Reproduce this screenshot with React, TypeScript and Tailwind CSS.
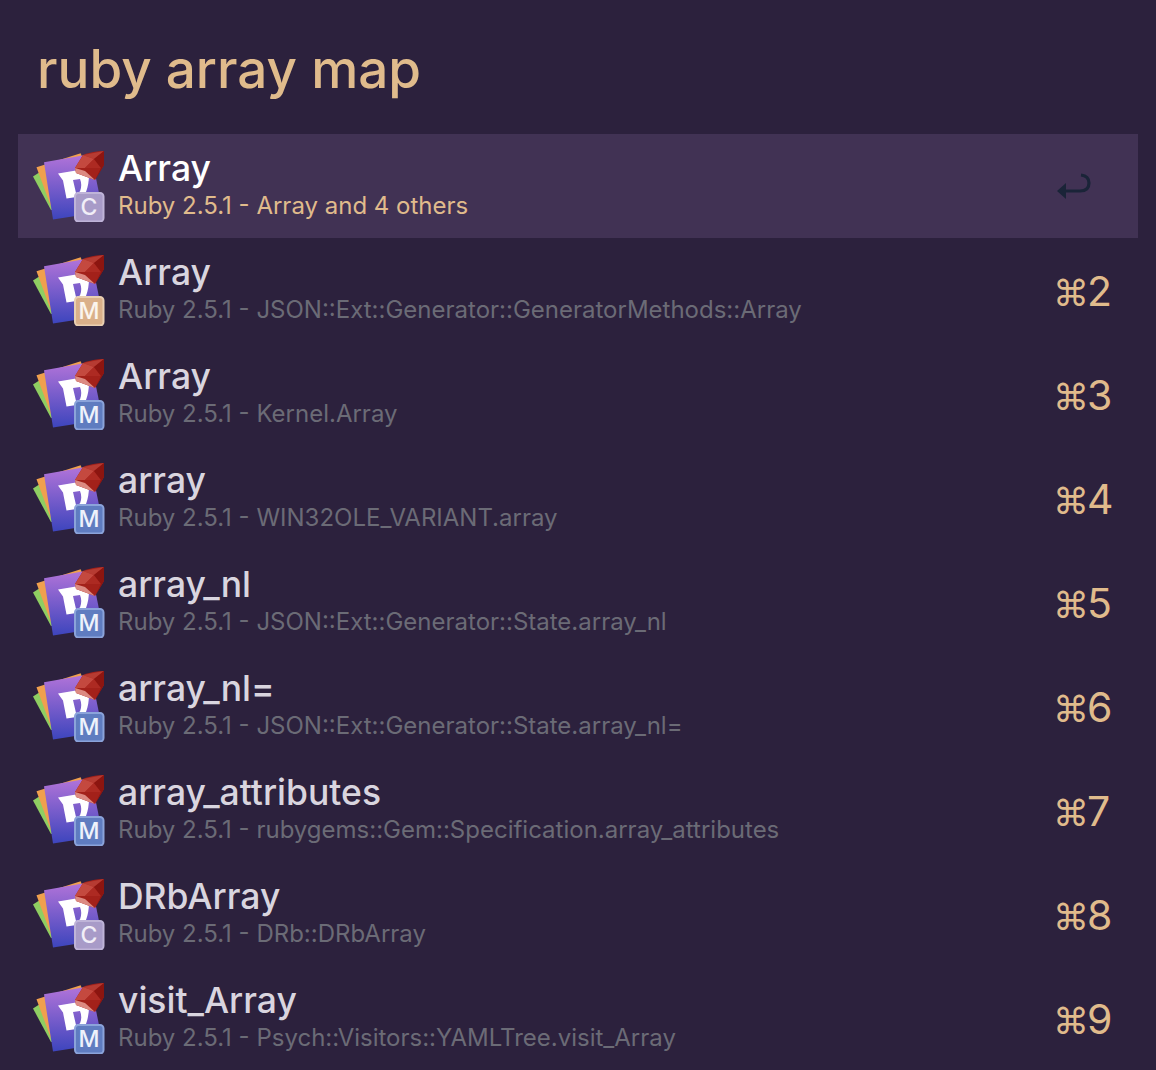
import React from "react";

const rows = [
  { t: "Array", s: "Ruby 2.5.1 - Array and 4 others", b: "C", k: "", sel: true },
  { t: "Array", s: "Ruby 2.5.1 - JSON::Ext::Generator::GeneratorMethods::Array", b: "MO", k: "2" },
  { t: "Array", s: "Ruby 2.5.1 - Kernel.Array", b: "M", k: "3" },
  { t: "array", s: "Ruby 2.5.1 - WIN32OLE_VARIANT.array", b: "M", k: "4" },
  { t: "array_nl", s: "Ruby 2.5.1 - JSON::Ext::Generator::State.array_nl", b: "M", k: "5" },
  { t: "array_nl=", s: "Ruby 2.5.1 - JSON::Ext::Generator::State.array_nl=", b: "M", k: "6" },
  { t: "array_attributes", s: "Ruby 2.5.1 - rubygems::Gem::Specification.array_attributes", b: "M", k: "7" },
  { t: "DRbArray", s: "Ruby 2.5.1 - DRb::DRbArray", b: "C", k: "8" },
  { t: "visit_Array", s: "Ruby 2.5.1 - Psych::Visitors::YAMLTree.visit_Array", b: "M", k: "9" },
];

function Icon({ b, id }: { b: string; id: number }) {
  const badge =
    b === "C"
      ? { fill: "#a89bc8", stroke: "#bfb4d8", ink: "#f1eef7" }
      : b === "MO"
      ? { fill: "#dab08a", stroke: "#e9cfb2", ink: "#fbf5ee" }
      : { fill: "#5f7cc0", stroke: "#8ba3da", ink: "#eef2fb" };
  return (
    <svg width="72" height="72" viewBox="0 0 72 72" className="shrink-0">
      <defs>
        <linearGradient id={`p${id}`} x1="0" y1="0" x2="0" y2="1">
          <stop offset="0" stopColor="#b374d9" />
          <stop offset="1" stopColor="#3d45bd" />
        </linearGradient>
      </defs>
      <path d="M0 26.5 L7 22 L20 60 L18 60 Z" fill="#8fce62" />
      <path d="M3.5 17.3 L47.7 3.3 L50 10 L20 62 Z" fill="#f0a04e" />
      <path d="M11 12.3 L58 4 L66 43 L68 62 L20 69.5 Z" fill={`url(#p${id})`} />
      <path
        fillRule="evenodd"
        d="M25 23.5 L52 19 L56 24 Q56 34 53 42 L48 46 L43.5 47 L33.5 48.5 L30 30.5 Z M40 30 L43 43 L47 41.5 Q49.5 35 47 29 Z"
        fill="#fff"
      />
      <path d="M50 5 Q60 1 71 1 L71 15 L62 30 L43 23 L42 18 Z" fill="#a3211a" />
      <path d="M50 5 L71 1 L61 9 Z" fill="#b63b32" />
      <path d="M50 5 L42 18 L52 18 L61 9 Z" fill="#c4493f" />
      <path d="M52 18 L61 9 L68 18 Z" fill="#ad2a22" />
      <path d="M71 1 L71 15 L62 30 L68 18 L61 9 Z" fill="#8c1510" />
      <path d="M42 18 L43 23 L62 30 L52 21 Z" fill="#dc8a82" />
      <rect x="42" y="43" width="28.5" height="28.5" rx="3.5" fill={badge.fill} stroke={badge.stroke} strokeWidth="2" />
      <text
        x="56"
        y="65"
        textAnchor="middle"
        fontSize="23"
        fontWeight="500"
        fill={badge.ink}
        style={{ fontFamily: "Inter, sans-serif" }}
      >
        {b === "C" ? "C" : "M"}
      </text>
    </svg>
  );
}

export default function App() {
  return (
    <div className="w-[1156px] h-[1070px] overflow-hidden bg-[#2c213d] px-[18px] font-['Inter','Liberation_Sans',sans-serif]">
      <div className="h-[134px] pl-[19px] pt-[32px] text-[53px] leading-[74px] font-[450] text-[#e0bb8c]">ruby array map</div>
      <div className="w-[1120px]">
        {rows.map((r, i) => (
          <div key={i} className={`flex h-[104px] items-center pl-[15px] ${r.sel ? "bg-[#413254]" : ""}`}>
            <Icon b={r.b} id={i} />
            <div className="ml-[13px] flex min-w-0 flex-1 flex-col">
              <div className={`mt-[-1px] h-[40px] text-[35.5px] leading-[40px] font-[450] ${r.sel ? "text-white" : "text-[#d9d5df]"}`}>{r.t}</div>
              <div className={`mt-[1px] h-[32px] text-[24px] leading-[32px] ${r.sel ? "text-[#e0bb8c]" : "text-[#6b6b76]"}`}>{r.s}</div>
            </div>
            {r.sel ? (
              <svg width="34" height="28" viewBox="0 0 34 28" className="mb-[-2px] mr-[47px]" fill="none">
                <path d="M5 18 H23 Q32 18 32 10 Q32 3 24 2" stroke="#1a2438" strokeWidth="3.2" />
                <path d="M0 18 L9 10 V26 Z" fill="#1a2438" />
              </svg>
            ) : (
              <div className="mr-[26px] mt-[4px] flex items-baseline text-[#e0bb8c]">
                <span className="text-[36px] leading-[50px] font-['DejaVu_Sans',sans-serif]">⌘</span>
                <span className="ml-[-2px] w-[25px] text-[41px] leading-[50px]">{r.k}</span>
              </div>
            )}
          </div>
        ))}
      </div>
    </div>
  );
}
